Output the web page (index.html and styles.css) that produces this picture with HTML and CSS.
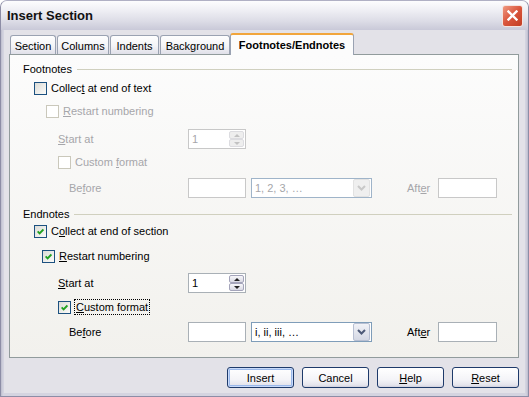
FILE: index.html
```html
<!DOCTYPE html>
<html lang="en">
<head>
    <meta charset="UTF-8">
    <title>Insert Section</title>
    <link rel="stylesheet" href="styles.css">
</head>
<body>

<div class="window">
    <div class="titlebar">
        <span class="title">Insert Section</span>
        <span class="close">
            <svg width="11" height="11" viewBox="0 0 11 11"><path d="M1.5 1.5 L9.5 9.5 M9.5 1.5 L1.5 9.5" stroke="#fff" stroke-width="2.4" stroke-linecap="square"/></svg>
        </span>
    </div>

    <div class="client">
        <div class="tabs">
            <div class="tab t-section">Section</div>
            <div class="tab t-columns">Columns</div>
            <div class="tab t-indents">Indents</div>
            <div class="tab t-background">Background</div>
            <div class="tab active">Footnotes/Endnotes</div>
        </div>

        <div class="panel">
            <!-- Footnotes -->
            <div class="group fn">
                <div class="head"><span>Footnotes</span><i class="rule"></i></div>
                <div class="row check r-collect"><span class="box"></span><span>Collec<u>t</u> at end of text</span></div>
                <div class="row check r-restart off"><span class="box"></span><span><u>R</u>estart numbering</span></div>
                <div class="row field r-start off">
                    <span class="lbl lbl-start"><u>S</u>tart at</span>
                    <span class="spin"><span class="val">1</span><span class="arrows"><i class="up"></i><i class="down"></i></span></span>
                </div>
                <div class="row check r-custom off"><span class="box"></span><span>Custom <u>f</u>ormat</span></div>
                <div class="row field r-before off">
                    <span class="lbl lbl-before">Be<u>f</u>ore</span>
                    <span class="input"></span>
                    <span class="combo"><span class="val">1, 2, 3, …</span><span class="drop"><svg width="9" height="6" viewBox="0 0 9 6"><path d="M1 1 L4.5 4.5 L8 1" fill="none" stroke-width="2"/></svg></span></span>
                    <span class="lbl lbl-after">Aft<u>e</u>r</span>
                    <span class="input after"></span>
                </div>
            </div>

            <!-- Endnotes -->
            <div class="group en">
                <div class="head"><span>Endnotes</span><i class="rule"></i></div>
                <div class="row check r-collect"><span class="box on"><svg width="7" height="7" viewBox="0 0 7 7"><path d="M0.6 3.3 L2.6 5.3 L6.4 1.4" fill="none" stroke="#21a121" stroke-width="1.9"/></svg></span><span>C<u>o</u>llect at end of section</span></div>
                <div class="row check r-restart"><span class="box on"><svg width="7" height="7" viewBox="0 0 7 7"><path d="M0.6 3.3 L2.6 5.3 L6.4 1.4" fill="none" stroke="#21a121" stroke-width="1.9"/></svg></span><span><u>R</u>estart numbering</span></div>
                <div class="row field r-start">
                    <span class="lbl lbl-start"><u>S</u>tart at</span>
                    <span class="spin"><span class="val">1</span><span class="arrows"><i class="up"></i><i class="down"></i></span></span>
                </div>
                <div class="row check r-custom"><span class="box on"><svg width="7" height="7" viewBox="0 0 7 7"><path d="M0.6 3.3 L2.6 5.3 L6.4 1.4" fill="none" stroke="#21a121" stroke-width="1.9"/></svg></span><span class="focus"><u>C</u>ustom format</span></div>
                <div class="row field r-before">
                    <span class="lbl lbl-before">Be<u>f</u>ore</span>
                    <span class="input"></span>
                    <span class="combo"><span class="val">i, ii, iii, …</span><span class="drop"><svg width="9" height="6" viewBox="0 0 9 6"><path d="M1 1 L4.5 4.5 L8 1" fill="none" stroke-width="2"/></svg></span></span>
                    <span class="lbl lbl-after">Aft<u>e</u>r</span>
                    <span class="input after"></span>
                </div>
            </div>
        </div>

        <div class="buttons">
            <button class="btn default">Insert</button>
            <button class="btn">Cancel</button>
            <button class="btn"><u>H</u>elp</button>
            <button class="btn"><u>R</u>eset</button>
        </div>
    </div>
</div>

</body>
</html>
```

FILE: styles.css
```css
body {
    margin: 0;
    font-family: "Liberation Sans", Arial, sans-serif;
    font-size: 11px;
    color: #000;
}
.window {
    width: 529px;
    height: 397px;
    box-sizing: border-box;
    border: 1px solid #8d8da6;
    border-top-color: #b0b0c4;
    border-radius: 7px 7px 0 0;
    background: linear-gradient(90deg, #bcbccc, #d4d4e0 2px, #d4d4e0 calc(100% - 2px), #bcbccc);
    display: flex;
    flex-direction: column;
    overflow: hidden;
}
.titlebar {
    height: 29px;
    flex: none;
    display: flex;
    align-items: center;
    padding: 0 5px 0 6px;
    background: linear-gradient(#fdfdfe, #f0f0f5 30%, #dcdce6 70%, #c9c9d8);
}
.title {
    flex: 1;
    font-size: 13px;
    font-weight: bold;
    color: #111;
}
.close {
    width: 21px;
    height: 22px;
    box-sizing: border-box;
    border: 1px solid #f4e4e0;
    border-radius: 3px;
    background: linear-gradient(135deg, #f09a82, #d9553c 50%, #c23e24);
    display: flex;
    align-items: center;
    justify-content: center;
}
.close svg {
    display: block;
}
.client {
    flex: 1;
    margin: 0 3px 3px;
    background: #e3e2e8;
    padding: 3px 6px 5px 5px;
    display: flex;
    flex-direction: column;
}

/* tabs */
.tabs {
    height: 21px;
    display: flex;
    align-items: flex-end;
    gap: 1px;
    padding-left: 1px;
}
.tab {
    height: 19px;
    box-sizing: border-box;
    border: 1px solid #9aa2b2;
    border-bottom: none;
    border-radius: 3px 3px 0 0;
    background: linear-gradient(#fefefe, #f4f4f7 55%, #e0e0e9);
    display: flex;
    align-items: center;
    justify-content: center;
    padding-top: 1px;
}
.t-section { width: 46px; }
.t-columns { width: 52px; }
.t-indents { width: 49px; }
.t-background { width: 70px; }
.tab.active {
    width: 124px;
    height: 22px;
    margin-left: -1px;
    margin-bottom: -1px;
    position: relative;
    z-index: 1;
    border-top: 2px solid #f1a53b;
    background: #fcfcfc;
    font-weight: bold;
    padding-top: 0;
    padding-bottom: 1px;
}

/* panel */
.panel {
    height: 304px;
    box-sizing: border-box;
    border: 1px solid #919b9c;
    background: linear-gradient(#fcfcfc, #f2f1ed);
    padding: 7px 6px 0 13px;
}
.head {
    height: 14px;
    display: flex;
    align-items: center;
}
.rule {
    flex: 1;
    height: 1px;
    background: #d0d0bf;
    margin-left: 5px;
}
.row {
    display: flex;
    align-items: center;
}
.row.check { height: 16px; }
.row.field { height: 20px; }

.box {
    width: 13px;
    height: 13px;
    box-sizing: border-box;
    border: 1px solid #1c5180;
    background: linear-gradient(135deg, #dcdcd7, #fbfbf9);
    margin-right: 4px;
    display: flex;
    align-items: center;
    justify-content: center;
    flex: none;
}
.box svg { display: block; }
.off { color: #a6a6aa; }
.off .box {
    border-color: #cac8bb;
    background: #fff;
}

.focus {
    border: 1px dotted #000;
    padding: 0 1px;
    margin-left: -1px;
    line-height: 14px;
}

/* vertical rhythm */
.fn .r-collect { margin-top: 4px; margin-left: 11px; }
.fn .r-restart { margin-top: 7px; margin-left: 23px; }
.fn .r-start { margin-top: 10px; }
.fn .r-custom { margin-top: 5px; margin-left: 35px; }
.fn .r-before { margin-top: 8px; }
.en { margin-top: 9px; }
.en .r-collect { margin-top: 2px; margin-left: 11px; }
.en .r-restart { margin-top: 9px; margin-left: 19px; }
.en .r-start { margin-top: 9px; }
.en .r-custom { margin-top: 6px; margin-left: 35px; }
.en .r-before { margin-top: 7px; }

.lbl-start { margin-left: 35px; width: 130px; }
.lbl-before { margin-left: 46px; width: 119px; }
.lbl-after { margin-left: 35px; width: 31px; }

/* inputs */
.input, .spin, .combo {
    height: 20px;
    box-sizing: border-box;
    border: 1px solid #a9b0b6;
    background: #fff;
    display: flex;
    align-items: center;
}
.input { width: 58px; }
.input.after { width: 59px; }
.spin { width: 58px; }
.val {
    flex: 1;
    padding-left: 3px;
}
.arrows {
    width: 15px;
    height: 16px;
    margin-right: 1px;
    display: flex;
    flex-direction: column;
    gap: 0;
}
.arrows i {
    flex: 1;
    box-sizing: border-box;
    border: 1px solid #a4a4ba;
    border-radius: 2px;
    background: linear-gradient(#f7f7fa, #d9d9e3);
    display: flex;
    align-items: center;
    justify-content: center;
}
.arrows i::after {
    content: "";
    border-left: 3px solid transparent;
    border-right: 3px solid transparent;
}
.arrows .up::after { border-bottom: 3px solid #222; }
.arrows .down::after { border-top: 3px solid #222; }

.combo {
    width: 121px;
    margin-left: 5px;
    border-color: #7f9db9;
}
.drop {
    width: 17px;
    height: 18px;
    margin-right: 1px;
    box-sizing: border-box;
    border: 1px solid #b7bfd2;
    border-radius: 2px;
    background: linear-gradient(#f1f2f7, #d4d8e4);
    display: flex;
    align-items: center;
    justify-content: center;
}
.drop svg { display: block; stroke: #4d5a78; }

.off .input, .off .spin { border-color: #c8c8c8; }
.off .combo { border-color: #9fb4c9; }
.off .arrows i {
    border-color: #dcdce0;
    background: #eeeeee;
}
.off .arrows .up::after { border-bottom-color: #c2c2c2; }
.off .arrows .down::after { border-top-color: #c2c2c2; }
.off .drop {
    border-color: #e2e2e2;
    background: #efefef;
}
.off .drop svg { stroke: #c8c8c8; }

/* buttons */
.buttons {
    margin-top: 9px;
    height: 21px;
    display: flex;
    justify-content: flex-end;
    gap: 8px;
}
.btn {
    width: 67px;
    height: 21px;
    border: 1px solid #1e3a6a;
    border-radius: 3px;
    background: linear-gradient(#ffffff, #f4f4f8 60%, #e4e4ec 90%, #cfcfdc);
    font-family: "Liberation Sans", Arial, sans-serif;
    font-size: 11px;
    color: #000;
    padding: 0;
}
.btn.default {
    box-shadow: inset 0 0 0 1px #c8dafa, inset 0 0 0 2px #9ab8ea;
}
```
